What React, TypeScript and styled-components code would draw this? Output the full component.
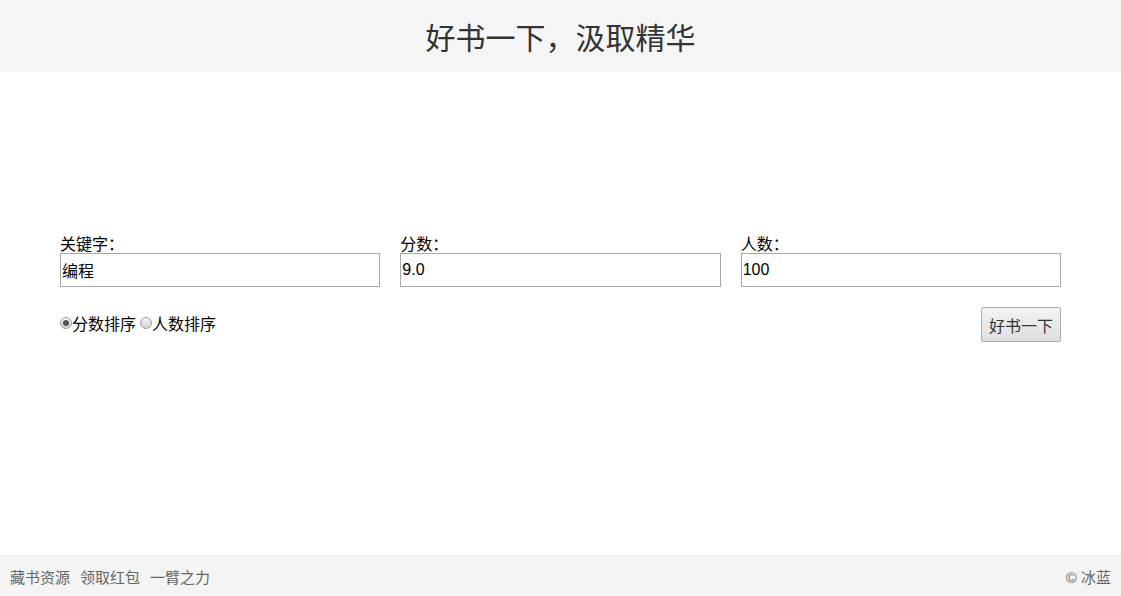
import styled, { createGlobalStyle } from 'styled-components';

const GlobalStyle = createGlobalStyle`
    html, body {
        margin: 0;
        padding: 0;
        background: #fff;
        font-family: "Liberation Sans", "Noto Sans CJK SC", sans-serif;
    }
`

const Page = styled.div`
    display: flex;
    flex-direction: column;
    min-height: 100vh;
`

const Header = styled.header`
    height: 72px;
    background-color: #f5f5f5;
    display: flex;
    justify-content: center;
    align-items: center;
    h1{
        margin: 0;
        font-size: 30px;
        font-weight: normal;
        color: #333;
    }
`

const Main = styled.main`
    flex: 1;
    padding-top: 164px;
`

const Form = styled.form`
    padding: 0 60px;
`

const Fields = styled.div`
    display: grid;
    grid-template-columns: repeat(3, 1fr);
    gap: 20px;
`

const Field = styled.label`
    display: flex;
    flex-direction: column;
    font-size: 16px;
    line-height: 17px;
    color: #000;
`

const TextInput = styled.input`
    box-sizing: border-box;
    height: 34px;
    width: 100%;
    margin: 0;
    padding: 0 1px;
    border: 1px solid #a9a9a9;
    font-family: inherit;
    font-size: 16px;
    color: #000;
    outline: none;
`

const Actions = styled.div`
    display: flex;
    justify-content: space-between;
    align-items: center;
    margin-top: 20px;
`

const RadioGroup = styled.div`
    display: flex;
    align-items: center;
    padding-bottom: 4px;
    font-size: 16px;
    color: #000;
    label{
        display: flex;
        align-items: center;
        margin-right: 4px;
    }
`

const Radio = styled.input`
    appearance: none;
    box-sizing: border-box;
    width: 12px;
    height: 12px;
    margin: 0;
    border-radius: 50%;
    border: 1px solid #a0a0a0;
    background: linear-gradient(#f2f2f2, #d4d4d4);
    position: relative;
    &:checked::after{
        content: '';
        position: absolute;
        left: 2px;
        top: 2px;
        width: 6px;
        height: 6px;
        border-radius: 50%;
        background: #555;
    }
`

const Submit = styled.button`
    width: 80px;
    height: 35px;
    padding: 0;
    border: 1px solid #acacac;
    border-radius: 2px;
    background: linear-gradient(#f4f4f4, #dedede);
    font-family: inherit;
    font-size: 16px;
    color: #333;
    cursor: pointer;
`

const Footer = styled.footer`
    height: 40px;
    border-top: 1px solid #ebebeb;
    background-color: #f4f4f4;
    display: flex;
    justify-content: space-between;
    align-items: center;
    padding: 0 10px;
    font-size: 15px;
    color: #666;
`

const Links = styled.nav`
    display: flex;
    gap: 10px;
    a{
        color: #666;
        text-decoration: none;
    }
`

function App(){
    return(
        <Page>
            <GlobalStyle />
            <Header>
                <h1>好书一下，汲取精华</h1>
            </Header>
            <Main>
                <Form onSubmit={(e) => e.preventDefault()}>
                    <Fields>
                        <Field>
                            关键字：
                            <TextInput type='text' defaultValue='编程' />
                        </Field>
                        <Field>
                            分数：
                            <TextInput type='text' defaultValue='9.0' />
                        </Field>
                        <Field>
                            人数：
                            <TextInput type='text' defaultValue='100' />
                        </Field>
                    </Fields>
                    <Actions>
                        <RadioGroup>
                            <label>
                                <Radio type='radio' name='sort' defaultChecked />分数排序
                            </label>
                            <label>
                                <Radio type='radio' name='sort' />人数排序
                            </label>
                        </RadioGroup>
                        <Submit type='submit'>好书一下</Submit>
                    </Actions>
                </Form>
            </Main>
            <Footer>
                <Links>
                    <a href='#'>藏书资源</a>
                    <a href='#'>领取红包</a>
                    <a href='#'>一臂之力</a>
                </Links>
                <span>© 冰蓝</span>
            </Footer>
        </Page>
    )
}

export default App;
